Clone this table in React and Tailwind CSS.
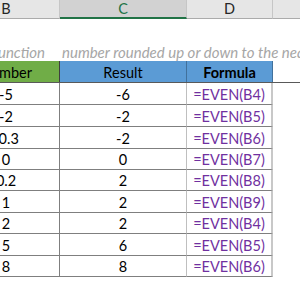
const rows = [
  { n: "-5", r: "-6", f: "=EVEN(B4)", h: "h-[22px]" },
  { n: "-2", r: "-2", f: "=EVEN(B5)", h: "h-[22px]" },
  { n: "-0.3", r: "-2", f: "=EVEN(B6)", h: "h-[22px]" },
  { n: "0", r: "0", f: "=EVEN(B7)", h: "h-[21px]" },
  { n: "0.2", r: "2", f: "=EVEN(B8)", h: "h-[21px]" },
  { n: "1", r: "2", f: "=EVEN(B9)", h: "h-[22px]" },
  { n: "2", r: "2", f: "=EVEN(B4)", h: "h-[21px]" },
  { n: "5", r: "6", f: "=EVEN(B5)", h: "h-[22px]" },
  { n: "8", r: "8", f: "=EVEN(B6)", h: "h-[21px]" },
];

export default function App() {
  return (
    <div className="w-[300px] h-[300px] overflow-hidden bg-white font-['Lato',sans-serif] text-[14.5px] text-black">
      {/* column letters */}
      <div className="flex ml-[-47px] h-[19px] text-[14.5px]">
        <div className="w-[107px] shrink-0 bg-[#e6e6e6] border-r border-b border-[#c6c6c6] border-b-[#ababab] flex items-center justify-center text-[#262626]">
          B
        </div>
        <div className="w-[127px] shrink-0 bg-[#d2d2d2] border-r border-[#c6c6c6] border-b-2 border-b-[#217346] flex items-center justify-center text-[#217346]">
          C
        </div>
        <div className="w-[86px] shrink-0 bg-[#e6e6e6] border-r border-b border-[#c6c6c6] border-b-[#ababab] flex items-center justify-center text-[#262626]">
          D
        </div>
        <div className="flex-1 bg-[#e6e6e6] border-b border-[#ababab]" />
      </div>

      {/* blank row */}
      <div className="h-[21px]" />

      {/* description row */}
      <div className="h-[21px] flex items-center italic text-[15px] text-[#a6a6a6] whitespace-nowrap pt-[3px]">
        <div className="w-[45px] shrink-0 overflow-hidden flex justify-end">Function</div>
        <div className="ml-[17px]">number rounded up or down to the nearest even integer</div>
      </div>

      {/* table */}
      <div className="ml-[-47px]">
        <div className="flex h-[22px] border-b border-[#595959]">
          <div className="w-[107px] shrink-0 bg-[#70ad47] border-r border-[#3f3f3f] flex items-center justify-center pt-[2px]">
            Number
          </div>
          <div className="w-[127px] shrink-0 bg-[#5b9bd5] border-r border-[#41719c] flex items-center justify-center pt-[2px]">
            Result
          </div>
          <div className="w-[86px] shrink-0 bg-[#5b9bd5] border-r border-[#41719c] flex items-center justify-center font-bold pt-[2px]">
            Formula
          </div>
        </div>
        {rows.map((row, i) => (
          <div key={i} className={`flex ${row.h}`}>
            <div className="w-[107px] shrink-0 border-r border-b border-[#7f7f7f] flex items-center justify-center pt-[2px]">
              {row.n}
            </div>
            <div className="w-[127px] shrink-0 border-r border-r-[#bfbfbf] border-b border-b-[#7f7f7f] flex items-center justify-center pt-[2px]">
              {row.r}
            </div>
            <div className="w-[86px] shrink-0 border-r-2 border-r-[#c8c8c8] border-b border-b-[#7f7f7f] flex items-center justify-center text-[#7030a0] pt-[2px]">
              {row.f}
            </div>
          </div>
        ))}
      </div>
    </div>
  );
}
